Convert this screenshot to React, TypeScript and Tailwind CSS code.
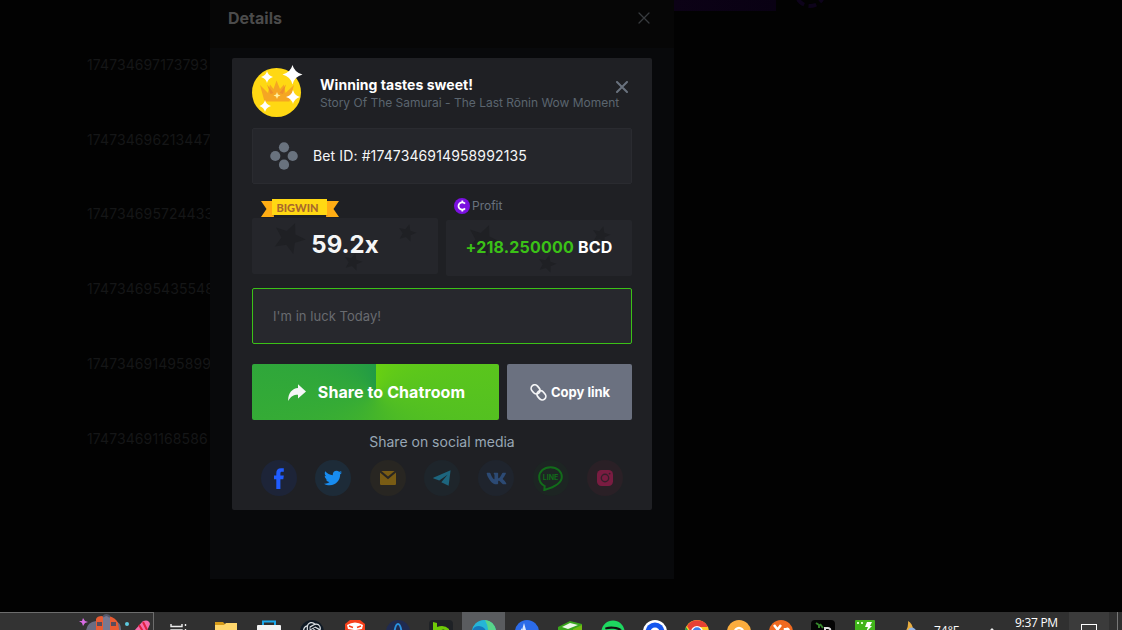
import type { ReactNode } from 'react';
import { FaTwitter, FaVk, FaSpotify } from 'react-icons/fa';
import { SiOpenai } from 'react-icons/si';

const betIds = [
  '174734697173793',
  '174734696213447',
  '174734695724433',
  '174734695435548',
  '174734691495899',
  '174734691168586',
];

function CloseIcon({ className }: { className: string }) {
  return (
    <svg viewBox="0 0 12 12" className={className} fill="none" stroke="currentColor" strokeLinecap="round">
      <path d="M1 1 11 11M11 1 1 11" />
    </svg>
  );
}

function MedalIcon() {
  return (
    <svg viewBox="0 0 52 54" className="-mt-px h-[54px] w-[52px] shrink-0">
      <circle cx="24.5" cy="28.5" r="24.5" fill="#ffd813" />
      <path d="M8 21 16 29 18 20.5 21.5 25 24.5 16.5 28 25 32 20.5 33.5 29 42 21 37.5 37.5H12.5Z" fill="#f5a623" />
      <path d="M15 20.5 21.500 29 18.500 30ZM34 20.500 27.500 29 31 30Z" fill="#ee8f2c" />
      <path d="M25 28l1 2.500 2.500 1-2.500 1-1 2.500-1-2.500-2.500-1 2.500-1Z" fill="#fff0a0" />
      <g fill="#fff">
        <path d="M40.500 1Q42.500 8.500 50.500 10.500 42.500 12.500 40.500 20.500 38.500 12.500 30.500 10.500 38.500 8.500 40.500 1Z" />
        <path d="M15 7Q16 11.500 21 13 16 14.500 15 19 14 14.500 9 13 14 11.500 15 7Z" />
        <path d="M41 26Q42.500 31.500 48 33 42.500 34.500 41 40 39.500 34.500 34 33 39.500 31.500 41 26Z" />
        <path d="M13 36Q14 40.500 19 42 14 43.500 13 48 12 43.500 7.500 42 12 40.500 13 36Z" />
      </g>
    </svg>
  );
}

function BetIcon() {
  return (
    <svg viewBox="0 0 28 28" className="h-7 w-7" fill="#69727e">
      <circle cx="14" cy="5.300" r="5.100" />
      <circle cx="5.300" cy="14" r="5.100" />
      <circle cx="22.700" cy="14" r="5.100" />
      <circle cx="14" cy="22.700" r="5.100" />
    </svg>
  );
}

// Faint stars behind the stat values
function Stars() {
  const star = 'M0-10 2.900-3.500 10-3.100 4.500 1.400 6.200 8.200 0 4.500-6.200 8.200-4.500 1.400-10-3.100-2.900-3.500Z';
  return (
    <svg viewBox="0 0 186 56" className="absolute inset-0 h-full w-full" fill="#1f2024">
      <path d={star} transform="translate(37 20) rotate(22) scale(1.600)" />
      <path d={star} transform="translate(155 15) rotate(15) scale(.9)" />
      <path d={star} transform="translate(101 44) rotate(15) scale(.9)" />
    </svg>
  );
}

function BigWinRibbon() {
  return (
    <div className="relative h-[18px] w-[78px]">
      <svg viewBox="0 0 78 18" className="absolute inset-0 h-full w-full">
        <path d="M0 2H13V18H0L5.500 10Z" fill="#ffad14" />
        <path d="M78 2H65V18H78L72.500 10Z" fill="#ffad14" />
        <path d="M11 16H13V18ZM67 16H65V18Z" fill="#d78618" />
        <rect x="11" width="55" height="16" fill="#ffd813" />
      </svg>
      <span className="absolute inset-x-0 top-0 pr-[5px] text-center font-[Lato] text-[11px] font-black leading-[17px] text-[#a9692c]">BIGWIN</span>
    </div>
  );
}

function CoinIcon() {
  return (
    <svg viewBox="0 0 16 16" className="h-4 w-4">
      <circle cx="8" cy="8" r="8" fill="#7a10e0" />
      <path d="M11 5.600A3.700 3.700 0 1 0 11 10.400M8.300 2.500V4.500M8.300 11.500V13.500" fill="none" stroke="#fff" strokeWidth="1.800" />
    </svg>
  );
}

function FacebookIcon() {
  return (
    <svg viewBox="0 0 10 21" className="h-[21px] w-[10px]" fill="currentColor">
      <path d="M2.300 21V11.200H0V7.500H2.300V5C2.300 1.700 3.900.2 7 .2H9.800V3.800H8C6.700 3.800 6.400 4.300 6.400 5.400V7.500H9.800L9.300 11.200H6.400V21Z" />
    </svg>
  );
}

function MailIcon() {
  return (
    <svg viewBox="0 0 16 14" className="h-[14px] w-4" fill="currentColor">
      <path d="M0 1.500 8 8.200 16 1.500V12.500A1.300 1.300 0 0 1 14.700 14H1.300A1.300 1.300 0 0 1 0 12.500Z" />
      <path d="M1.400 0H14.600L8 5.600Z" />
    </svg>
  );
}

function PlaneIcon() {
  return (
    <svg viewBox="0 0 18 16" className="h-4 w-[18px]" fill="currentColor">
      <path d="M17.600.2 15.600 15.800 8.300 12.200 14.500 4.800 6.300 10.400.6 8.500Q-.3 8 .8 7.400Z" />
    </svg>
  );
}

function LineIcon() {
  return (
    <svg viewBox="0 0 25 25" className="h-[25px] w-[25px]">
      <path d="M12.500 1.200C6 1.200 1.200 5.300 1.200 11c0 5 3.300 8 5.500 9.100L6.300 24C14 21.800 23.800 17.600 23.800 11 23.800 5.300 19 1.200 12.500 1.200Z" fill="none" stroke="currentColor" strokeWidth="2" />
      <text x="12.500" y="14" textAnchor="middle" fontSize="7" fontWeight="700" fontFamily="Inter, sans-serif" fill="currentColor">LINE</text>
    </svg>
  );
}

function InstagramIcon() {
  return (
    <svg viewBox="0 0 16 16" className="h-4 w-4">
      <rect width="16" height="16" rx="4.500" fill="currentColor" />
      <circle cx="8" cy="8" r="3.700" fill="none" stroke="#34202a" strokeWidth="1.400" />
      <circle cx="12.600" cy="3.600" r=".9" fill="#34202a" />
    </svg>
  );
}

const socials: { name: string; style: string; icon: ReactNode }[] = [
  { name: 'Facebook', style: 'bg-[#1d2438] text-[#205cff]', icon: <FacebookIcon /> },
  { name: 'Twitter', style: 'bg-[#1d2b38] text-[#188cf0]', icon: <FaTwitter className="h-[18px] w-[18px]" /> },
  { name: 'Email', style: 'bg-[#282622] text-[#795c14]', icon: <MailIcon /> },
  { name: 'Telegram', style: 'bg-[#1e252b] text-[#1d657e]', icon: <PlaneIcon /> },
  { name: 'VK', style: 'bg-[#1f242d] text-[#2c4a74]', icon: <FaVk className="h-[21px] w-[21px]" /> },
  { name: 'Line', style: 'bg-[#1d2523] text-[#126c1a]', icon: <LineIcon /> },
  { name: 'Instagram', style: 'bg-[#2a2026] text-[#7a1c41]', icon: <InstagramIcon /> },
];

function ShareCard() {
  return (
    <div className="mx-auto h-[452px] w-[420px] rounded-[2px] bg-[#1f2024] px-5 pt-[7px]">
      {/* Header */}
      <div className="flex h-[63px]">
        <MedalIcon />
        <div className="ml-4 flex-1 whitespace-nowrap pt-[11px]">
          <div className="flex h-[18px] items-center justify-between pr-1">
            <h2 className="text-[14px] font-bold leading-[18px] tracking-[.04px] text-white">Winning tastes sweet!</h2>
            <CloseIcon className="mt-1 h-3 w-3 stroke-2 text-[#69727e]" />
          </div>
          <p className="text-[12px] leading-[17px] tracking-[-.01px] text-[#5b656f]">Story Of The Samurai - The Last Rōnin Wow Moment</p>
        </div>
      </div>

      {/* Bet */}
      <div className="flex h-14 items-center gap-[15px] rounded-[2px] border border-[#2a2b30] bg-[#25262b] pl-[17px]">
        <BetIcon />
        <span className="-mt-[2px] text-[14px] tracking-[.12px] text-[#f5f6f7]">Bet ID: #1747346914958992135</span>
      </div>

      {/* Stats */}
      <div className="mt-[14px] flex gap-2">
        <div className="w-[186px]">
          <div className="flex h-5 items-end pb-px pl-[9px]">
            <BigWinRibbon />
          </div>
          <div className="relative flex h-14 items-center justify-center rounded-[2px] bg-[#25262b]">
            <Stars />
            <span className="relative -mt-[2px] text-[24px] font-bold text-[#f5f6f7]">59.2x</span>
          </div>
        </div>
        <div className="w-[186px]">
          <div className="flex h-[22px] gap-[2px] pl-2">
            <CoinIcon />
            <span className="text-[12px] leading-[16px] text-[#69727e]">Profit</span>
          </div>
          <div className="relative flex h-14 items-center justify-center rounded-[2px] bg-[#25262b]">
            <Stars />
            <span className="relative -mt-[2px] text-[16px] font-bold tracking-[.2px] text-white">
              <span className="text-[#3bc117]">+218.250000</span> BCD
            </span>
          </div>
        </div>
      </div>

      <input
        type="text"
        placeholder="I'm in luck Today!"
        className="mt-3 block h-14 w-full rounded-[2px] border border-[#3bc117] bg-[#27282d] px-5 text-[13px] tracking-[.05px] outline-none placeholder:text-[#696b70]"
      />

      {/* Actions */}
      <div className="mt-5 flex gap-2">
        <button className="flex h-14 w-[247px] items-center justify-center gap-3 rounded-[2px] bg-[conic-gradient(from_0deg_at_124px_28px,#69d012,#57c31f_25%,#45b52a_50%,#32a938_75%,#219a46)] pl-[2px] text-[16px] font-bold tracking-[.09px] text-white">
          <svg viewBox="0 0 18 17" className="h-[17px] w-[18px]" fill="#f5f6f7">
            <path d="M10 .2 18 7.500 10 14.600V10.700C5.500 10.700 2.500 12.500.2 17-.2 9.500 4 4.500 10 4Z" />
          </svg>
          Share to Chatroom
        </button>
        <button className="flex h-14 w-[125px] items-center justify-center gap-1 rounded-[2px] bg-[#6b7180] pl-px text-[13px] font-bold text-white">
          <svg viewBox="0 0 17 17" className="h-[17px] w-[17px]" fill="none" stroke="#f5f6f7" strokeWidth="1.700" strokeLinecap="round">
            <rect x="-4.900" y="-3.600" width="9.800" height="7.200" rx="3.600" transform="translate(5.600 5.400) rotate(50)" />
            <rect x="-4.900" y="-3.600" width="9.800" height="7.200" rx="3.600" transform="translate(11.400 11.300) rotate(50)" />
          </svg>
          <span className="pt-px">Copy link</span>
        </button>
      </div>

      {/* Social */}
      <p className="mt-3 text-center text-[14px] leading-5 text-[#98a7b5]">Share on social media</p>
      <div className="mt-2 flex justify-between px-[9px]">
        {socials.map(({ name, style, icon }) => (
          <a key={name} aria-label={name} className={`flex h-9 w-9 items-center justify-center rounded-full ${style}`}>
            {icon}
          </a>
        ))}
      </div>
    </div>
  );
}

const apps: ReactNode[] = [
  // Explorer
  <><path d="M1 2H9L11 4V10H1Z" fill="#d69b18" /><path d="M1 5H10L12 3H23V22H1Z" fill="#ffd76c" /></>,
  // Store
  <><path d="M6 5V1.500H18V5" fill="none" stroke="#1ba9ed" strokeWidth="2" /><rect y="5" width="24" height="19" rx="1" fill="#f3f3f3" /></>,
  // ChatGPT
  <><circle cx="12" cy="12" r="12" fill="#101b26" /><SiOpenai x="3" y="2" size={19} color="#d9dee2" /></>,
  // Brave
  <><path d="M7 0H17L22 4V17L12 24 2 17V4Z" fill="#f6401a" /><path d="M4 5Q12 0 20 5L19 9 13 10 12 12 11 10 5 9Z" fill="#fff" /><path d="M6 6 10 7.500M18 6 14 7.500" stroke="#f6401a" strokeWidth="1.500" /></>,
  <><circle cx="12" cy="12" r="12" fill="#202b50" /><path d="M8 16Q9 4 12 4T16 16" fill="none" stroke="#2a91df" strokeWidth="2" /></>,
  <><rect width="24" height="24" rx="4" fill="#1f2226" /><path d="M4 2 8 3V7Q15 4 20 9V18H16V10Q12 8 8 15H4Z" fill="#6fca08" /></>,
  // Edge
  <><circle cx="12" cy="12" r="12" fill="#25b5d8" /><path d="M13 0Q22 1 24 10 23 15 16 14 17 7 13 0Z" fill="#58d58a" /><path d="M0 12Q1 6 7 6 14 7 15 14H0Z" fill="#1677bd" /></>,
  <><circle cx="12" cy="12" r="12" fill="#2c6be8" /><path d="M9 3 11 10H7ZM5 11 7 8V11Z" fill="#dce9ff" /></>,
  <><path d="M0 7 12 1 24 4V18H0Z" fill="#39a51c" /><path d="M4 7 12 3 20 5 10 9Z" fill="#edf8e8" /><path d="M15 9 24 5V15H15Z" fill="#74bd13" /></>,
  <><circle cx="12" cy="12" r="8" fill="#111" /><FaSpotify x="0" y="0" size={24} color="#1ed760" /></>,
  <><circle cx="12" cy="12" r="12" fill="#fff" /><circle cx="12" cy="12" r="9.500" fill="#1456ee" /><circle cx="12" cy="12" r="4.500" fill="#fff" /></>,
  // Chrome
  <><circle cx="12" cy="12" r="12" fill="#ffcb27" /><path d="M2 6A12 12 0 0 1 23 7H12L7 14Z" fill="#e74133" /><path d="M1 7 7 16 12 24A12 12 0 0 1 1 7Z" fill="#22a052" /><circle cx="12" cy="12" r="6" fill="#fff" /><circle cx="12" cy="12" r="4.700" fill="#3f7ee8" /></>,
  <><circle cx="12" cy="12" r="12" fill="#fcad3d" /><circle cx="12" cy="12" r="4" fill="none" stroke="#fff" strokeWidth="2.500" /></>,
  <><circle cx="12" cy="12" r="12" fill="#f06a20" /><path d="M5 5 12 14M12 5 5 14M16 14V8M16 10Q19 7 20 11" fill="none" stroke="#fff" strokeWidth="2.500" /></>,
  <><rect width="24" height="24" rx="4" fill="#050505" /><path d="M5 3 8 5V8M9 4 12 8" stroke="#36852c" strokeWidth="2" /><path d="M14 15V8H17Q20 8 19 12" fill="none" stroke="#ddd" strokeWidth="2" /></>,
  <><rect x="2" width="20" height="24" rx="1" fill="#41b51b" /><path d="M4 3H6M8 3H10" stroke="#d8ffc7" strokeWidth="2" /><path d="M14 2H19L17 6H19L13 12 15 7H12Z" fill="#fff" /></>,
];

function Taskbar() {
  return (
    <div className="h-[18px] overflow-hidden bg-[#303030] font-['Open_Sans',sans-serif] text-white">
      <div className="flex h-10">
        <div className="flex w-[154px] shrink-0 justify-end border-r border-t border-[#6d6d6d] bg-[#333]">
          <svg viewBox="0 0 75 39" className="h-[39px] w-[75px]">
            <path d="M5 5 7 8 10 9 7 10 5 13 4 10 1 8 4 8Z" fill="#d86ce5" />
            <path d="M8 18Q9 9 18 8L20 20H8ZM37 8Q44 9 43 20H36Z" fill="#696c82" />
            <path d="M18 6Q19 3 24 3H31Q38 5 40 10L42 22H18Z" fill="#e85b32" />
            <path d="M25 3H32V22H25Z" fill="#777992" />
            <path d="M25 4Q28 0 32 4" fill="none" stroke="#54576a" strokeWidth="2" />
            <path d="M19 9H24V13H19ZM33 9H38V13H33Z" fill="#5a4c5b" />
            <circle cx="49" cy="11" r="2" fill="#5dc9df" />
            <path d="M56 18 65 8Q71 6 72 11L68 20H56Z" fill="#f66bab" />
            <path d="M61 12 66 20M65 9 69 17" stroke="#df203d" strokeWidth="2" />
          </svg>
        </div>
        <div className="flex w-[50px] shrink-0 items-center justify-center">
          <svg viewBox="0 0 18 18" className="h-[18px] w-[18px]" fill="none" stroke="#eee" strokeWidth="1.400">
            <path d="M1 1V3.500H12V1M1 7H12V14H1ZM15.500 1V3M15.500 6V16" />
          </svg>
        </div>
        {apps.map((icon, i) => (
          <div
            key={i}
            className={`flex shrink-0 items-center justify-center ${i < 10 ? 'w-[43px]' : 'w-[42px]'} ${i === 6 ? 'bg-[#5a5c5f]' : ''}`}
          >
            <svg viewBox="0 0 24 24" className="h-6 w-6">{icon}</svg>
          </div>
        ))}
        <div className="flex flex-1 pl-[12px]">
          <svg viewBox="0 0 24 24" className="mt-2 h-6 w-6 shrink-0">
            <path d="M10 1Q16 4 15 14H2Q11 12 10 1Z" fill="#e9ad40" />
            <path d="M9 12Q12 5 17 9L20 13H9Z" fill="#8fb2e4" />
          </svg>
          <span className="ml-[12px] mt-[11px] text-[12px] leading-4">74°F</span>
          <svg viewBox="0 0 10 6" className="ml-[28px] mt-4 h-[6px] w-[10px] shrink-0" fill="none" stroke="#eee" strokeWidth="1.300">
            <path d="M1 5 5 1 9 5" />
          </svg>
          <span className="ml-[18px] mt-[3px] whitespace-nowrap text-[12px] leading-4 tracking-[-.300px]">9:37 PM</span>
        </div>
        <div className="flex w-10 shrink-0 justify-center bg-[#3b3b3b] pt-3">
          <div className="h-[14px] w-4 border border-white" />
        </div>
        <div className="mr-[4px] w-[9px] shrink-0 border-r border-[#777]" />
      </div>
    </div>
  );
}

export default function App() {
  return (
    <div className="h-[630px] w-[1122px] overflow-hidden bg-[#020202] font-[Inter,sans-serif]">
      <div className="flex h-[612px]">
        {/* Bet history */}
        <div className="w-[210px] pl-[87px] pt-[27px]">
          {betIds.map((id) => (
            <div key={id} className="flex h-[74.800px] items-center text-[14px] tracking-[.1px] text-[#151617]">{id}</div>
          ))}
        </div>

        {/* Details dialog */}
        <div className="z-10 h-[579px] w-[464px] bg-[#08090b]">
          <div className="flex h-12 items-start justify-between bg-[#060606] pl-[18px] pr-6 pt-[6px]">
            <h1 className="text-[16px] font-bold leading-6 text-[#4b4b4b]">Details</h1>
            <CloseIcon className="mt-[6px] h-3 w-3 stroke-[1.300] text-[#383b3f]" />
          </div>
          <div className="pt-[10px]">
            <ShareCard />
          </div>
        </div>

        <div className="flex gap-[18px]">
          <div className="h-[11px] w-[102px] bg-linear-to-r from-[#0c0216] to-[#090113]" />
          <div className="-mt-6 h-8 w-8 rounded-full border-4 border-dashed border-[#0d031a]" />
        </div>
      </div>
      <Taskbar />
    </div>
  );
}
